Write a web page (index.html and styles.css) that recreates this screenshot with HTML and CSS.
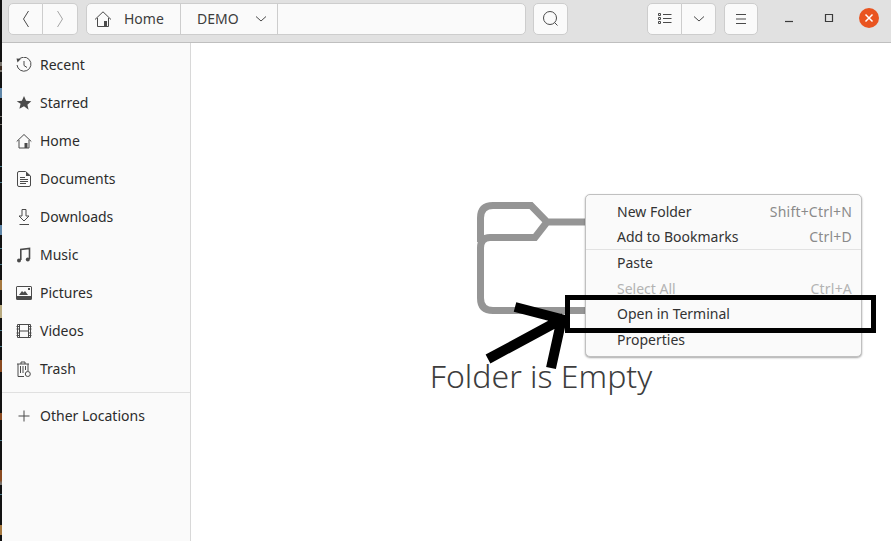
FILE: index.html
```html
<!DOCTYPE html>
<html lang="en">
<head>
<meta charset="utf-8">
<title>DEMO</title>
<link rel="stylesheet" href="styles.css">
</head>
<body>
<div class="window">
  <header class="toolbar">
    <div class="group nav">
      <button class="btn btn-nav"><svg width="16" height="18" viewBox="0 0 16 18"><path class="ln" d="M10.500 1 5.500 9l5 8"/></svg></button>
      <button class="btn btn-nav dim"><svg width="16" height="18" viewBox="0 0 16 18"><path class="ln" d="M5.500 1l5 8-5 8"/></svg></button>
    </div>
    <div class="pathbar">
      <div class="crumb crumb-home">
        <svg width="18" height="18" viewBox="0 0 18 18"><path class="ln" d="M1 9.500 9 1.800l8 7.700M3.500 8v8.500h11V8"/><path class="fill" d="M10 11h3v5.500h-3z"/></svg>
        <span>Home</span>
      </div>
      <div class="crumb crumb-demo">
        <span>DEMO</span>
        <svg width="12" height="8" viewBox="0 0 12 8"><path class="ln" d="M1 1.500 6 6l5-4.500"/></svg>
      </div>
      <div class="path-rest"></div>
    </div>
    <button class="btn btn-search"><svg width="16" height="16" viewBox="0 0 16 16"><circle class="ln" cx="7" cy="7" r="6.500"/><path class="ln" d="m11.500 11.500 3 3"/></svg></button>
    <div class="group views">
      <button class="btn btn-view"><svg width="14" height="12" viewBox="0 0 14 12"><path class="ln" d="M5 1.500h8.500M5 5.500h8.500M5 9.500h8.500"/><path class="ln" d="M.5.500h2v2h-2zM.5 4.500h2v2h-2zM.5 8.500h2v2h-2z"/></svg></button>
      <button class="btn btn-caret"><svg width="12" height="8" viewBox="0 0 12 8"><path class="ln" d="M1 1.500 6 6l5-4.500"/></svg></button>
    </div>
    <button class="btn btn-menu"><svg width="12" height="10" viewBox="0 0 12 10"><path class="ln" d="M1 .5h10M1 5h10M1 9.500h10"/></svg></button>
    <div class="winctl">
      <svg class="ctl" width="10" height="10" viewBox="0 0 10 10"><path class="ln dark" d="M1 8.500h8"/></svg>
      <svg class="ctl" width="10" height="10" viewBox="0 0 10 10"><path class="ln dark" d="M1.500 1.500h7v7h-7z"/></svg>
      <span class="close"><svg width="10" height="10" viewBox="0 0 10 10"><path class="x" d="m1.500 1.500 7 7m0-7-7 7"/></svg></span>
    </div>
  </header>
  <div class="body">
    <aside class="sidebar">
      <ul class="places">
        <li class="place"><svg class="ico" width="16" height="16" viewBox="0 0 16 16"><path class="ln" d="M2 3.500A7 7 0 1 1 1 8M8 4v4.500l3 2"/><path class="fill" d="M.5 1.500 5 1.800 1.500 5.500z"/></svg><span>Recent</span></li>
        <li class="place"><svg class="ico" width="16" height="16" viewBox="0 0 16 16"><path class="fill" d="m8 1 2.100 4.800 5.200.5-3.900 3.400 1.200 5.100L8 11.200l-4.600 2.600 1.200-5.100L.7 6.300l5.200-.5z"/></svg><span>Starred</span></li>
        <li class="place"><svg class="ico" width="16" height="16" viewBox="0 0 16 16"><path class="ln" d="M.7 8.500 8 1.500l7.300 7M3 7v8h10V7"/><path class="fill" d="M8.500 10h3v5h-3z"/></svg><span>Home</span></li>
        <li class="place"><svg class="ico" width="16" height="16" viewBox="0 0 16 16"><path class="ln" d="M3 .5h6.500L14.500 5v9a1.500 1.500 0 0 1-1.500 1.500H3A1.500 1.500 0 0 1 1.500 14V2A1.500 1.500 0 0 1 3 .5zM4 6.500h5M4 8.500h8M4 10.500h8M4 12.500h6"/><path class="fill" d="M10 .5 14.500 5H10z"/></svg><span>Documents</span></li>
        <li class="place"><svg class="ico" width="16" height="16" viewBox="0 0 16 16"><path class="ln" d="M6 .5h4v6.500h3L8 12 3 7h3zM3.500 15.500h9.500"/></svg><span>Downloads</span></li>
        <li class="place"><svg class="ico" width="16" height="16" viewBox="0 0 16 16"><path class="ln w2" d="M4.800 13V2.500l8.700-1V12"/><circle class="fill" cx="3" cy="13.500" r="2"/><circle class="fill" cx="11.800" cy="12.500" r="2"/></svg><span>Music</span></li>
        <li class="place"><svg class="ico" width="16" height="16" viewBox="0 0 16 16"><path class="fill" fill-rule="evenodd" d="M1.500 1h13A1.500 1.500 0 0 1 16 2.500v11a1.500 1.500 0 0 1-1.500 1.500h-13A1.500 1.500 0 0 1 0 13.500v-11A1.500 1.500 0 0 1 1.500 1zM1 2v9h14V2z"/><path class="fill" d="m3 10 3-4 1.500 1.500L9 6l3 4zM12 3h2v2h-2z"/></svg><span>Pictures</span></li>
        <li class="place"><svg class="ico" width="16" height="16" viewBox="0 0 16 16"><path class="ln" d="M1.500 1.500h13v13h-13zM3.500 1.500v13M12.500 1.500v13M3.500 8h9M.5 3.500h3M.5 6h3M.5 10h3M.5 12.500h3M12.500 3.500h3M12.500 6h3M12.500 10h3M12.500 12.500h3"/></svg><span>Videos</span></li>
        <li class="place"><svg class="ico" width="16" height="16" viewBox="0 0 16 16"><path class="ln" d="M1 3h12M5 3V1h4v2M2 3v12.500h6M12 3v7M4.500 5v7M7 5v7M9.500 5v4"/><circle class="ln" cx="11.800" cy="13" r="2.500"/></svg><span>Trash</span></li>
      </ul>
      <div class="place other"><svg class="ico" width="16" height="16" viewBox="0 0 16 16"><path class="ln" d="M8 2.500v11M2.500 8h11"/></svg><span>Other Locations</span></div>
    </aside>
    <main class="content">
      <div class="empty">
        <svg class="folder" width="128" height="114" viewBox="0 0 128 114"><path class="folder-ln" d="M3.500 40V16Q3.500 3.500 16 3.500h38L70 20h53.500v86Q123.500 108.500 110 108.500H16Q3.500 108.500 3.500 96V46Q3.500 35.500 13 35.500H58L70 20"/></svg>
        <h1 class="empty-title">Folder is Empty</h1>
      </div>
      <ul class="menu">
        <li class="mi"><span>New Folder</span><kbd>Shift+Ctrl+N</kbd></li>
        <li class="mi sep"><span>Add to Bookmarks</span><kbd>Ctrl+D</kbd></li>
        <li class="mi"><span>Paste</span></li>
        <li class="mi off"><span>Select All</span><kbd>Ctrl+A</kbd></li>
        <li class="mi"><span>Open in Terminal</span></li>
        <li class="mi"><span>Properties</span></li>
      </ul>
      <svg class="annot" width="700" height="498" viewBox="0 0 700 498"><path class="mark" d="M324 264 374 277M297 316 373 275M360 325 371 275"/><rect class="box" x="376.500" y="254.500" width="306" height="33"/></svg>
    </main>
  </div>
</div>
</body>
</html>
```

FILE: styles.css
```css
* { box-sizing: border-box; }
html, body { height: 100%; }
body {
  margin: 0;
  padding-left: 2px;
  background: linear-gradient(to bottom,
    #121212 0 62px, #77736c 62px 66px, #3a2a20 66px 70px, #77736c 70px 72px, #121212 72px 88px,
    #5f86a8 88px 98px, #121212 98px 116px, #77736c 116px 117px, #121212 117px 124px,
    #77736c 124px 125px, #121212 125px 166px,
    #4a7a8a 166px 167px, #121212 167px 182px, #4a7a8a 182px 183px, #121212 183px 225px,
    #5f86a8 225px 235px, #121212 235px 248px, #4a7a8a 248px 249px, #121212 249px 264px,
    #4a7a8a 264px 265px, #121212 265px 280px, #a5783f 280px 290px, #121212 290px 305px,
    #b8aa80 305px 318px, #121212 318px 330px, #4a7a8a 330px 331px, #121212 331px 346px,
    #4a7a8a 346px 347px, #121212 347px 360px, #8a4a20 360px 372px, #121212 372px 413px,
    #8a4a20 413px 420px, #121212 420px 440px, #4a7a8a 440px 441px, #121212 441px 470px,
    #8a4a20 470px 480px, #77736c 483px 485px, #121212 485px 494px, #4a7a8a 494px 495px,
    #121212 495px 525px, #a5783f 525px 535px, #121212 535px 541px);
  background-color: #121212;
  background-repeat: no-repeat;
  font-family: "Noto Sans", "Open Sans", sans-serif;
  font-size: 14px;
  color: #2e2e2e;
  overflow: hidden;
}
.window { height: 541px; display: flex; flex-direction: column; background: #fff; }
ul { list-style: none; margin: 0; padding: 0; }

.toolbar {
  height: 43px;
  flex: none;
  display: flex;
  align-items: flex-start;
  padding: 3px 0 0 6px;
  background: #e1e1e1;
  border-bottom: 1px solid #bfbfbf;
}
.btn {
  height: 32px;
  padding: 0;
  display: flex;
  align-items: center;
  justify-content: center;
  background: #fafafa;
  border: 1px solid #cdcdcd;
  border-radius: 5px;
}
.group { display: flex; }
.group .btn:first-child { border-radius: 5px 0 0 5px; }
.group .btn:last-child { border-radius: 0 5px 5px 0; border-left: 0; }
.nav { margin-right: 8px; }
.btn-nav { width: 35px; }
.dim .ln { stroke: #a5a5a5; }
.ln { fill: none; stroke: #4a4a4a; stroke-width: 1; }
.w2 { stroke-width: 1.6; }
.dark { stroke: #3a3a3a; stroke-width: 1.2; }
.fill { fill: #4a4a4a; }

.pathbar {
  width: 440px;
  height: 32px;
  display: flex;
  background: #fafafa;
  border: 1px solid #cdcdcd;
  border-radius: 5px;
  margin-right: 7px;
  font-size: 14px;
}
.crumb { display: flex; align-items: center; border-right: 1px solid #cdcdcd; color: #3d3d3d; }
.crumb span { margin-top: -2px; }
.crumb-home { width: 94px; padding-left: 7px; gap: 12px; }
.crumb-demo { width: 97px; padding-left: 16px; gap: 16px; }
.path-rest { flex: 1; }
.btn-search { width: 35px; margin-right: 79px; }
.btn-view { width: 35px; }
.btn-caret { width: 34px; }
.views { margin-right: 8px; }
.btn-menu { width: 34px; }
.winctl { display: flex; align-items: center; height: 30px; margin-left: 26px; }
.ctl { margin-right: 30px; }
.ctl + .ctl { margin-right: 25px; }
.close {
  width: 20px;
  height: 20px;
  border-radius: 50%;
  background: #e95420;
  display: flex;
  align-items: center;
  justify-content: center;
}
.x { fill: none; stroke: #fff; stroke-width: 1.5; }

.body { flex: 1; display: flex; min-height: 0; }
.sidebar { width: 189px; flex: none; background: #fafafa; border-right: 1px solid #d8d8d8; padding-top: 3px; }
.places { padding-bottom: 4px; border-bottom: 1px solid #e0e0e0; }
.place { height: 38px; display: flex; align-items: center; padding-left: 14px; gap: 8px; color: #2c2c2c; font-size: 14px; }
.place span { margin-top: -2px; }
.ico { flex: none; }
.other { margin-top: 4px; }

.content { flex: 1; position: relative; display: flex; justify-content: center; overflow: hidden; }
.empty { display: flex; flex-direction: column; align-items: center; padding-top: 159px; }
.folder { display: block; }
.folder-ln { fill: none; stroke: #959595; stroke-width: 7; stroke-linejoin: miter; }
.empty-title { margin: 40px 0 0; font-size: 32px; font-weight: 300; line-height: 40px; color: #3d3d3d; white-space: nowrap; }

.menu {
  position: absolute;
  left: 394px;
  top: 151px;
  width: 277px;
  height: 163px;
  padding-top: 3.6px;
  background: #fafafa;
  border: 1px solid #c0c0c0;
  border-radius: 5px;
  box-shadow: 0 1px 2px rgba(0, 0, 0, .35);
  font-size: 14px;
  color: #333;
}
.mi { height: 25.6px; padding: 0 9px 0 31px; display: flex; align-items: center; justify-content: space-between; }
.mi kbd { font: inherit; color: #8a8a8a; letter-spacing: .2px; }
.sep { box-shadow: inset 0 -1px 0 #e2e2e2; }
.off, .off kbd { color: #b3b3b3; }

.annot { position: absolute; left: 0; top: 0; pointer-events: none; }
.mark { fill: none; stroke: #000; stroke-width: 10; }
.box { fill: none; stroke: #000; stroke-width: 5; }
```
